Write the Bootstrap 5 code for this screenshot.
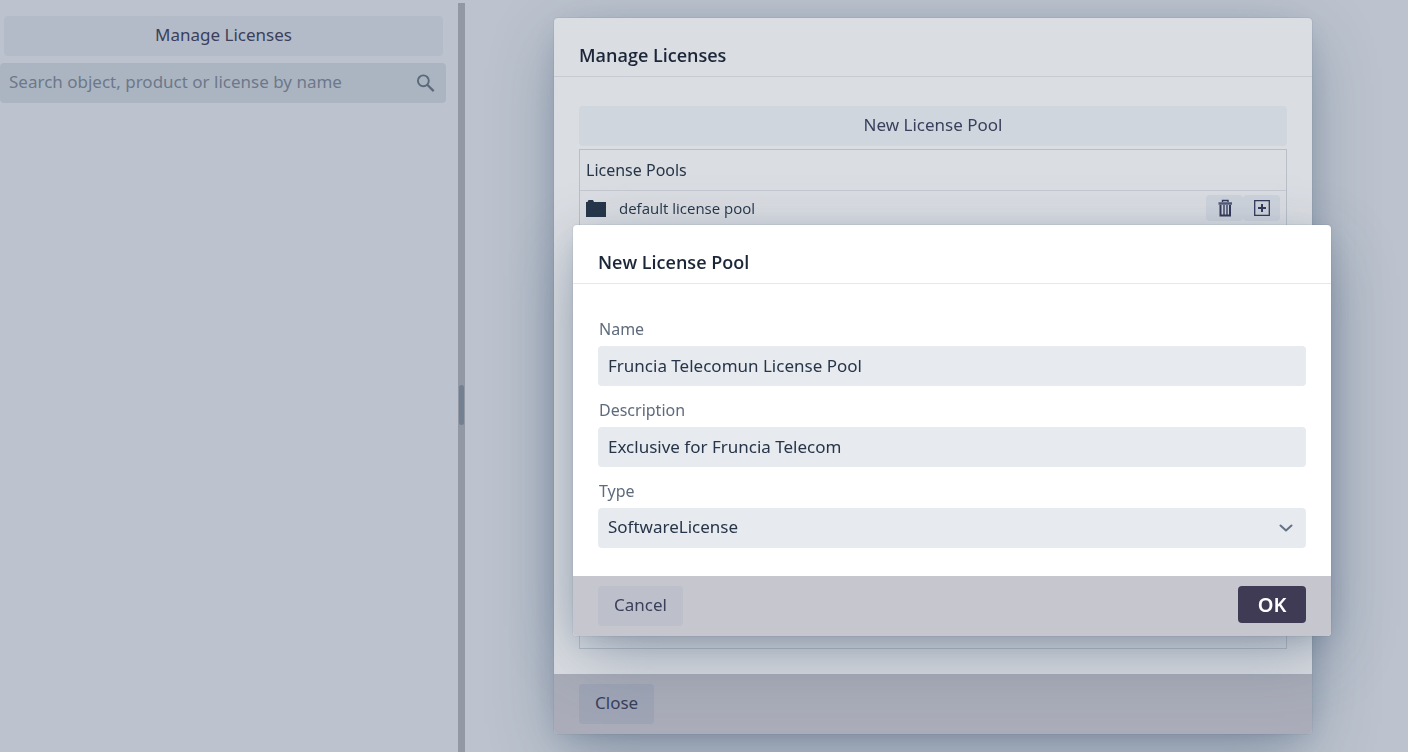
<!DOCTYPE html>
<html lang="en">
<head>
<meta charset="utf-8">
<meta name="viewport" content="width=device-width, initial-scale=1">
<title>Manage Licenses</title>
<link href="https://cdn.jsdelivr.net/npm/bootstrap@5.3.0/dist/css/bootstrap.min.css" rel="stylesheet">
<style>
body{font-family:"Noto Sans","Open Sans",sans-serif;font-size:17px;line-height:26px;color:#273548;background:#bcc3ce;overflow:hidden}
.side-pane{flex:0 0 458px;padding:16px 12px 0 0}
.splitter{flex:0 0 7px;margin-top:3px;padding-top:54px;background:#9299a5}
.split-handle{width:5px;height:40px;border-radius:3px;background:#738092}
.tone-btn{--bs-btn-border-width:0;font-size:17px;line-height:26px;padding:6px 16px 8px;border-radius:4px;color:#3a3f5c;height:40px}
.side-btn{background:#b4bbc8;margin:0 3px 7px 4px}
.search-box{background:#abb5c2;border-radius:4px;height:40px;padding:0 11px 0 9px}
.search-box input{font-size:17px;line-height:26px;padding:0 0 2px;color:#273548}
.search-box input::placeholder{color:#6d7889;opacity:1}
.layer{position:fixed;inset:0}
.layer-back{padding:18px 96px 18px 554px}
.layer-front{padding:225px 77px 0 573px}
.dlg{border-radius:4px;overflow:hidden;box-shadow:0 0 0 1px rgba(40,60,90,.06),0 6px 24px -8px rgba(40,65,95,.24),0 20px 64px -8px rgba(40,65,95,.42)}
.dlg-back{background:#dadde2}
.dlg-front{background:#fff}
.dlg-head{padding:24px 25px 8px;border-bottom:1px solid #c6cad1}
.dlg-front .dlg-head{border-color:#e5e7eb}
.dlg-head h2{font-family:"Open Sans","Noto Sans",sans-serif;font-size:18px;line-height:26px;font-weight:600;color:#1b2638}
.dlg-main{padding:29px 25px 25px}
.dlg-foot{padding:10px 25px;height:60px}
.dlg-back .dlg-foot{background:#aaadb9}
.dlg-front .dlg-foot{background:#c6c6ce}
.new-btn{background:#cfd6de;margin-bottom:3px}
.pool-box{border:1px solid #b8bfc9}
.pool-table{font-size:16px;line-height:24px}
.pool-table th{font-weight:400;height:40px;padding:0 6px;border-bottom:1px solid #c3c8d0}
.pool-table td{font-family:"Open Sans","Noto Sans",sans-serif;font-size:15px;height:35px;padding:0 6px}
.row-btn{--bs-btn-border-width:0;width:37px;height:26px;padding:0;background:#ced3dc;color:#33395a;border-radius:4px}
.close-btn{background:#9fa5b5}
.cancel-btn{background:#bdbfca}
.ok-btn{--bs-btn-border-width:0;width:68px;height:37px;padding:0;border-radius:4px;background:#3f3b54;color:#fff;font-size:20px;font-weight:600;line-height:37px}
.dlg-form{padding:33px 25px 28px}
.dlg-form label{font-size:16px;line-height:24px;color:#5f6b7c;margin-bottom:5px;padding-left:1px}
.dlg-form .fill{background-color:#e7eaef;border:0;border-radius:4px;height:40px;font-size:17px;line-height:26px;padding:6px 10px 8px;color:#273548}
.dlg-form select.fill{background-image:url("data:image/svg+xml,%3Csvg xmlns='http://www.w3.org/2000/svg' viewBox='0 0 16 16' fill='none' stroke='%23647284' stroke-width='2' stroke-linecap='round' stroke-linejoin='round'%3E%3Cpath d='M2.5 5.5L8 10.5L13.5 5.5'/%3E%3C/svg%3E");background-size:16px;background-position:right 12px center}
.field-gap{margin-bottom:12px}
</style>
</head>
<body>
<div class="d-flex vh-100">
  <aside class="side-pane d-flex flex-column">
    <button type="button" class="btn tone-btn side-btn">Manage Licenses</button>
    <div class="search-box d-flex align-items-center">
      <input type="search" class="form-control border-0 bg-transparent shadow-none" placeholder="Search object, product or license by name" aria-label="Search">
      <svg width="20" height="20" viewBox="0 0 20 20" fill="none" stroke="#5c697b" stroke-width="2" aria-hidden="true"><circle cx="7.7" cy="7.7" r="5.7"/><path d="M11.8 11.8L18.5 18.5" stroke-width="2.4"/></svg>
    </div>
  </aside>
  <div class="splitter d-flex align-items-center justify-content-center"><div class="split-handle"></div></div>
  <main class="flex-grow-1"></main>
</div>

<div class="layer layer-back">
  <section class="dlg dlg-back d-flex flex-column h-100" role="dialog" aria-labelledby="manage-title">
    <header class="dlg-head"><h2 id="manage-title" class="m-0">Manage Licenses</h2></header>
    <div class="dlg-main flex-grow-1 d-flex flex-column">
      <button type="button" class="btn tone-btn new-btn">New License Pool</button>
      <div class="pool-box flex-grow-1">
        <table class="pool-table w-100">
          <thead><tr><th colspan="2">License Pools</th></tr></thead>
          <tbody><tr>
            <td><div class="d-flex align-items-center"><svg class="me-2" width="25" height="18" viewBox="0 0 25 18" fill="#26364a" aria-hidden="true"><path d="M0 18V3H1.5L2.5 1H7L8 3H20V18Z"/></svg>default license pool</div></td>
            <td><div class="d-flex justify-content-end">
              <button type="button" class="btn row-btn d-flex align-items-center justify-content-center" aria-label="Delete pool"><svg width="16" height="18" viewBox="0 0 16 18" fill="none" stroke="currentColor"><path d="M5.5 3V1.5H11V3" stroke-width="1.4"/><path d="M1.5 4.500H15" stroke-width="2.6" opacity=".8"/><path d="M3.500 6V16.500H13V6" stroke-width="2"/><path d="M7 6V16M10 6V16" stroke-width="1.800" opacity=".75"/></svg></button>
              <button type="button" class="btn row-btn d-flex align-items-center justify-content-center" aria-label="Add license"><svg width="16" height="16" viewBox="0 0 16 16" fill="none" stroke="currentColor"><path d="M.7.7H15.3V15.3H.7Z" stroke-width="1.3"/><path d="M8 4V12M4 8H12" stroke-width="2"/></svg></button>
            </div></td>
          </tr></tbody>
        </table>
      </div>
    </div>
    <footer class="dlg-foot"><button type="button" class="btn tone-btn close-btn">Close</button></footer>
  </section>
</div>

<div class="layer layer-front">
  <section class="dlg dlg-front" role="dialog" aria-modal="true" aria-labelledby="new-title">
    <header class="dlg-head"><h2 id="new-title" class="m-0">New License Pool</h2></header>
    <form id="pool-form" class="dlg-form">
      <div class="field-gap"><label for="pool-name" class="d-block">Name</label><input id="pool-name" type="text" class="form-control fill" value="Fruncia Telecomun License Pool"></div>
      <div class="field-gap"><label for="pool-desc" class="d-block">Description</label><input id="pool-desc" type="text" class="form-control fill" value="Exclusive for Fruncia Telecom"></div>
      <div><label for="pool-type" class="d-block">Type</label><select id="pool-type" class="form-select fill"><option>SoftwareLicense</option></select></div>
    </form>
    <footer class="dlg-foot d-flex justify-content-between align-items-start">
      <button type="button" class="btn tone-btn cancel-btn">Cancel</button>
      <button type="submit" form="pool-form" class="btn ok-btn">OK</button>
    </footer>
  </section>
</div>
<script src="https://cdn.jsdelivr.net/npm/bootstrap@5.3.0/dist/js/bootstrap.bundle.min.js"></script>
</body>
</html>
